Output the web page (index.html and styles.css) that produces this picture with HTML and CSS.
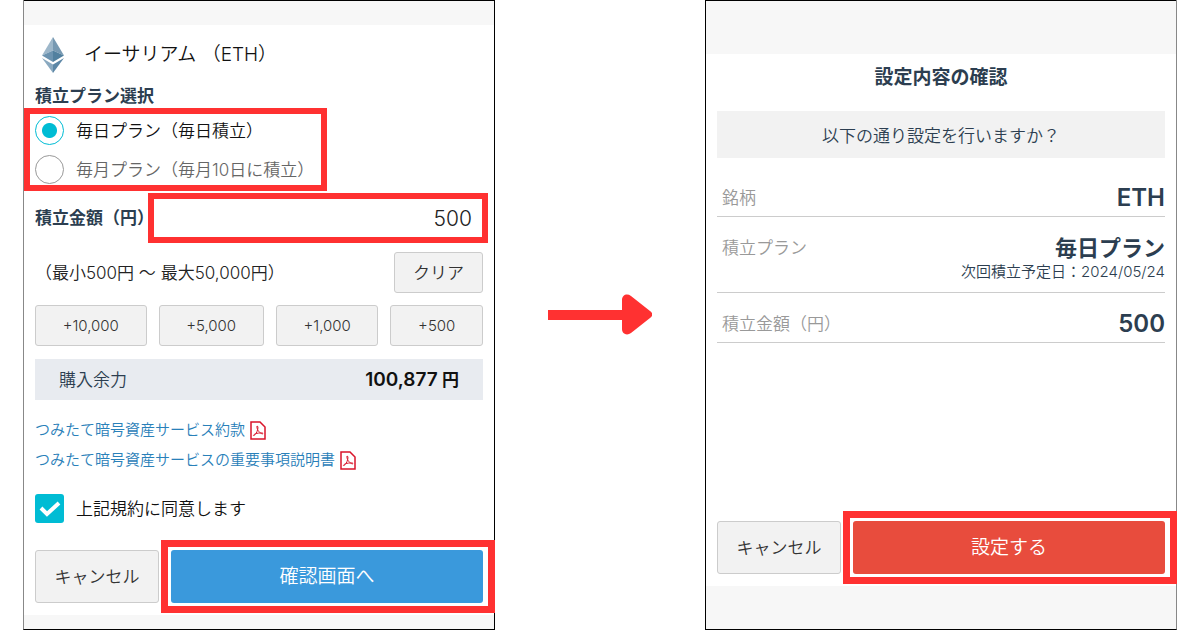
FILE: index.html
```html
<!DOCTYPE html>
<html lang="ja">
<head>
  <meta charset="UTF-8">
  <meta name="viewport" content="width=device-width, initial-scale=1">
  <title>つみたて設定</title>
  <link rel="stylesheet" href="styles.css">
</head>
<body>

  <main class="flow">

    <!-- 積立設定 -->
    <form class="screen screen-setting">
      <h1 class="coin">
        <svg class="coin-icon" viewBox="0 0 22 36" aria-hidden="true">
          <path fill="#9db7ca" d="M11 0 0 18.500 11 13.500z"/>
          <path fill="#7799b2" d="M11 0 22 18.500 11 13.500z"/>
          <path fill="#6c93b0" d="M0 18.500 11 13.500V25z"/>
          <path fill="#52809f" d="M22 18.500 11 13.500V25z"/>
          <path fill="#8aa9c0" d="M0 21 11 27.500V36z"/>
          <path fill="#5d87a6" d="M22 21 11 27.500V36z"/>
        </svg>
        イーサリアム （ETH）
      </h1>

      <h2 class="label" id="planLabel">積立プラン選択</h2>
      <div class="plans mark" role="radiogroup" aria-labelledby="planLabel">
        <label class="choice"><input type="radio" name="plan" value="daily" checked> 毎日プラン（毎日積立）</label>
        <label class="choice"><input type="radio" name="plan" value="monthly"> <span class="off">毎月プラン（毎月10日に積立）</span></label>
      </div>

      <div class="amount">
        <label class="label" for="amount">積立金額（円）</label>
        <input type="text" class="amount-input mark" id="amount" value="500" inputmode="numeric">
      </div>

      <div class="range">
        <span>（最小500円 〜 最大50,000円）</span>
        <button type="button" class="btn btn-clear">クリア</button>
      </div>

      <div class="quick">
        <button type="button" class="btn">+10,000</button>
        <button type="button" class="btn">+5,000</button>
        <button type="button" class="btn">+1,000</button>
        <button type="button" class="btn">+500</button>
      </div>

      <div class="balance">
        <span>購入余力</span>
        <strong><span class="num">100,877</span> 円</strong>
      </div>

      <ul class="docs">
        <li>
          <a href="#">つみたて暗号資産サービス約款
            <svg class="pdf" viewBox="0 0 16 19" aria-hidden="true">
              <path d="M1 1h9l5 5v12H1z"/>
              <path class="thin" d="M7 5c1.500 0 1 3 0 5.500S4 15 3.500 14.500 6 11.500 12.500 12c1 .2.500 1.300-1 .6C9 11.500 6.500 8 7 5z"/>
            </svg>
          </a>
        </li>
        <li>
          <a href="#">つみたて暗号資産サービスの重要事項説明書
            <svg class="pdf" viewBox="0 0 16 19" aria-hidden="true">
              <path d="M1 1h9l5 5v12H1z"/>
              <path class="thin" d="M7 5c1.500 0 1 3 0 5.500S4 15 3.500 14.500 6 11.500 12.500 12c1 .2.500 1.300-1 .6C9 11.500 6.500 8 7 5z"/>
            </svg>
          </a>
        </li>
      </ul>

      <label class="choice agree"><input type="checkbox" checked> 上記規約に同意します</label>

      <div class="actions">
        <button type="button" class="btn btn-cancel">キャンセル</button>
        <div class="mark mark-btn">
          <button type="button" class="btn btn-next">確認画面へ</button>
        </div>
      </div>
    </form>

    <svg class="arrow" viewBox="0 0 104 42" aria-hidden="true">
      <path d="M0 16h74V6c0-5 5-7 9-4l19 15c3 2 3 5 0 7L83 39c-4 3-9 1-9-4v-9H0z"/>
    </svg>

    <!-- 設定内容の確認 -->
    <section class="screen screen-confirm">
      <h2 class="title">設定内容の確認</h2>
      <p class="question">以下の通り設定を行いますか？</p>

      <dl class="summary">
        <div class="item">
          <dt>銘柄</dt>
          <dd>ETH</dd>
        </div>
        <div class="item item-plan">
          <dt>積立プラン</dt>
          <dd>毎日プラン <small>次回積立予定日：2024/05/24</small></dd>
        </div>
        <div class="item">
          <dt>積立金額（円）</dt>
          <dd>500</dd>
        </div>
      </dl>

      <div class="actions">
        <button type="button" class="btn btn-cancel">キャンセル</button>
        <div class="mark mark-btn">
          <button type="button" class="btn btn-submit">設定する</button>
        </div>
      </div>
    </section>

  </main>

</body>
</html>
```
FILE: styles.css
```css
* {
  box-sizing: border-box;
}
body {
  margin: 0;
  background: #fff;
  color: #222;
  font-family: Inter, "Noto Sans CJK JP", sans-serif;
  font-size: 17px;
  font-weight: 350;
  line-height: 22px;
}
h1, h2, p, dl, dd, ul {
  margin: 0;
  padding: 0;
}
button, input {
  font: inherit;
  color: inherit;
}
.flow {
  display: grid;
  grid-template-columns: 1fr 210px 1fr;
  min-height: 100vh;
  padding: 0 23px;
}

/* スマホ画面 */
.screen {
  display: flex;
  flex-direction: column;
  padding: 0 11px;
  border: 1px solid #000;
  border-top: 0;
}
.screen-setting {
  border-left-color: #888;
}
.screen-confirm {
  border-right-color: #888;
}
.screen::before,
.screen::after {
  content: "";
  flex: none;
  height: 24px;
  margin: 0 -11px;
  background: #f7f7f7;
  border-top: 1px solid #000;
}
.screen::after {
  height: 14px;
  border-top: 0;
}
.screen-confirm::before {
  height: 53px;
}
.screen-confirm::after {
  height: 43px;
}

/* 赤枠 */
.mark {
  border: 6px solid #ff3131;
}
.mark-btn {
  display: flex;
  flex: 1;
  margin-right: -12px;
  padding: 3px 5px 3px 3px;
  border-width: 7px;
}

.coin {
  display: flex;
  align-items: center;
  gap: 20px;
  height: 60px;
  padding-left: 7px;
  color: #111;
  font-size: 19px;
  font-weight: 350;
}
.coin-icon {
  width: 22px;
  height: 36px;
}
.label {
  color: #2c3e50;
  font-size: 17px;
  font-weight: 600;
}
.plans {
  display: grid;
  gap: 10px;
  width: fit-content;
  margin: 1px 0 0 -11px;
  padding: 2px 7px 1px 5px;
}
.choice {
  display: flex;
  align-items: center;
  gap: 12px;
  color: #111;
}
.off {
  color: #666;
}
.choice input {
  appearance: none;
  width: 29px;
  height: 29px;
  margin: 0;
  border: 1px solid #999;
  border-radius: 50%;
}
.choice input[type="radio"]:checked {
  border: 1px solid #00bcd4;
  background: radial-gradient(circle, #00bcd4 7px, #fff 8px);
}
.choice input[type="checkbox"] {
  border: 0;
  border-radius: 3px;
  background: #00bcd4;
}
.choice input[type="checkbox"]:checked {
  background: #00bcd4 url("data:image/svg+xml,%3Csvg xmlns='http://www.w3.org/2000/svg' viewBox='0 0 29 29'%3E%3Cpath d='M6 14l6 6L24 9' fill='none' stroke='white' stroke-width='4'/%3E%3C/svg%3E");
}

.amount {
  display: flex;
  align-items: center;
  margin: 2px -5px 0 0;
}
.amount .label {
  flex: none;
  margin-right: -6px;
}
.amount-input {
  flex: 1;
  min-width: 0;
  height: 50px;
  padding: 0 10px;
  background: #fff;
  font-size: 21px;
  text-align: right;
}

.btn {
  height: 41px;
  padding: 0 18px;
  border: 1px solid #ccc;
  border-radius: 3px;
  background: #f2f2f2;
  color: #333;
}
.range {
  display: flex;
  align-items: center;
  justify-content: space-between;
  margin-top: 9px;
}
.quick {
  display: flex;
  gap: 12px;
  margin-top: 12px;
  font-size: 15px;
}
.quick .btn {
  flex: auto;
}
.balance {
  display: flex;
  align-items: center;
  justify-content: space-between;
  height: 41px;
  margin-top: 13px;
  padding: 0 24px;
  background: #e8ebf0;
  color: #2c3e50;
}
.balance strong {
  color: #111;
  font-weight: 600;
}
.balance .num {
  font-size: 19px;
}

.docs {
  margin-top: 15px;
  list-style: none;
  font-size: 15px;
  line-height: 30px;
}
.docs a {
  display: flex;
  align-items: center;
  gap: 5px;
  color: #2980b9;
  text-decoration: none;
}
.pdf {
  width: 16px;
  height: 19px;
  fill: none;
  stroke: #d9152b;
  stroke-width: 1.5;
}
.pdf .thin {
  stroke-width: 1;
}
.agree {
  margin-top: 19px;
}

.actions {
  display: flex;
  align-items: center;
  gap: 2px;
  margin-top: auto;
  padding-bottom: 2px;
}
.actions .btn {
  height: 53px;
}
.btn-cancel {
  width: 124px;
}
.btn-next,
.btn-submit {
  flex: 1;
  border: 0;
  color: #fff;
  font-size: 19px;
}
.btn-next {
  background: #3a99dc;
}
.btn-submit {
  background: #e84c3d;
}

.arrow {
  width: 104px;
  place-self: center;
  fill: #ff3131;
}

.title {
  margin-top: 10px;
  color: #2c3e50;
  font-size: 19px;
  font-weight: 600;
  line-height: 28px;
  text-align: center;
}
.question {
  margin-top: 19px;
  padding: 14px 0 11px;
  background: #f2f2f2;
  color: #2c3e50;
  text-align: center;
}
.item {
  display: flex;
  justify-content: space-between;
  padding: 18px 0 5px 5px;
  border-bottom: 1px solid #ccc;
  line-height: 26px;
}
.item:first-child {
  padding-top: 27px;
}
.item-plan {
  padding-bottom: 9px;
}
.item dt {
  color: #999;
}
.item dd {
  color: #2c3e50;
  font-size: 24px;
  font-weight: 600;
  text-align: right;
}
.item-plan dd {
  font-size: 22px;
}
.item small {
  display: block;
  font-size: 15px;
  font-weight: 350;
  line-height: 22px;
}
```
